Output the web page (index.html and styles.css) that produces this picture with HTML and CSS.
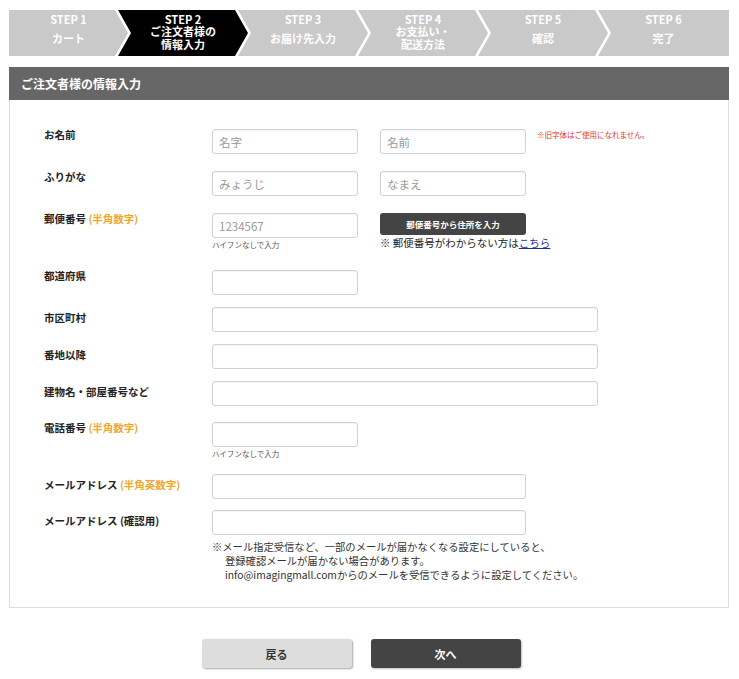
FILE: index.html
```html
<!DOCTYPE html>
<html lang="ja">
<head>
	<meta charset="utf-8">
	<title>ご注文者様の情報入力</title>
	<link rel="stylesheet" href="styles.css">
</head>
<body>
<div class="page">

	<ol class="steps">
		<li class="step step_first">
			<span class="step_no">STEP 1</span>
			<span class="step_name">カート</span>
		</li>
		<li class="step step_current">
			<span class="step_no">STEP 2</span>
			<span class="step_name">ご注文者様の<br>情報入力</span>
		</li>
		<li class="step">
			<span class="step_no">STEP 3</span>
			<span class="step_name">お届け先入力</span>
		</li>
		<li class="step">
			<span class="step_no">STEP 4</span>
			<span class="step_name">お支払い・<br>配送方法</span>
		</li>
		<li class="step">
			<span class="step_no">STEP 5</span>
			<span class="step_name">確認</span>
		</li>
		<li class="step step_last">
			<span class="step_no">STEP 6</span>
			<span class="step_name">完了</span>
		</li>
	</ol>

	<form class="panel">
		<h2 class="panel_title">ご注文者様の情報入力</h2>

		<div class="panel_body">
			<div class="field gap17">
				<label class="field_label">お名前</label>
				<div class="field_inputs">
					<input class="text short" type="text" placeholder="名字">
					<input class="text short" type="text" placeholder="名前">
					<span class="warn">※旧字体はご使用になれません。</span>
				</div>
			</div>

			<div class="field gap17">
				<label class="field_label">ふりがな</label>
				<div class="field_inputs">
					<input class="text short" type="text" placeholder="みょうじ">
					<input class="text short" type="text" placeholder="なまえ">
				</div>
			</div>

			<div class="field gap20">
				<label class="field_label">郵便番号 <em>(半角数字)</em></label>
				<div class="field_inputs">
					<div class="col">
						<input class="text short" type="text" placeholder="1234567">
						<span class="hint">ハイフンなしで入力</span>
					</div>
					<div class="col">
						<button class="zip_btn" type="button">郵便番号から住所を入力</button>
						<span class="zip_note">※ 郵便番号がわからない方は<a href="#">こちら</a></span>
					</div>
				</div>
			</div>

			<div class="field gap12">
				<label class="field_label">都道府県</label>
				<div class="field_inputs">
					<input class="text short" type="text">
				</div>
			</div>

			<div class="field gap12">
				<label class="field_label low">市区町村</label>
				<div class="field_inputs">
					<input class="text wide" type="text">
				</div>
			</div>

			<div class="field gap12">
				<label class="field_label low">番地以降</label>
				<div class="field_inputs">
					<input class="text wide" type="text">
				</div>
			</div>

			<div class="field gap16">
				<label class="field_label low">建物名・部屋番号など</label>
				<div class="field_inputs">
					<input class="text wide" type="text">
				</div>
			</div>

			<div class="field gap15">
				<label class="field_label">電話番号 <em>(半角数字)</em></label>
				<div class="field_inputs">
					<div class="col">
						<input class="text short" type="text">
						<span class="hint">ハイフンなしで入力</span>
					</div>
				</div>
			</div>

			<div class="field gap11">
				<label class="field_label low">メールアドレス <em>(半角英数字)</em></label>
				<div class="field_inputs">
					<input class="text mail" type="email">
				</div>
			</div>

			<div class="field">
				<label class="field_label low">メールアドレス (確認用)</label>
				<div class="field_inputs">
					<div class="col">
						<input class="text mail" type="email">
						<p class="mail_note">※メール指定受信など、一部のメールが届かなくなる設定にしていると、<br>登録確認メールが届かない場合があります。<br>info@imagingmall.comからのメールを受信できるように設定してください。</p>
					</div>
				</div>
			</div>
		</div>
	</form>

	<div class="actions">
		<button class="btn btn_back" type="button">戻る</button>
		<button class="btn btn_next" type="button">次へ</button>
	</div>

</div>
</body>
</html>
```

FILE: styles.css
```css
/* reset */
html, body, div, span, h2, p, ol, li, form, label, em { margin: 0; padding: 0; border: 0; }
ol { list-style: none; }
em { font-style: normal; }

body { font-family: "Noto Sans CJK JP", sans-serif; color: #222; background: #fff; }
.page { padding: 10px 10px 12px 9px; width: 720px; }

/* steps */
.steps { display: flex; height: 46px; }
.step {
	width: 130px; flex: none;
	margin-left: -10px;
	display: flex; flex-direction: column; align-items: center;
	padding: 3px 0 5px;
	box-sizing: border-box;
	background: #c9c9c9; color: #fff; font-weight: bold; text-align: center;
	clip-path: polygon(0 0, calc(100% - 13px) 0, 100% 50%, calc(100% - 13px) 100%, 0 100%, 13px 50%);
}
.step_first { width: 119px; margin-left: 0; clip-path: polygon(0 0, calc(100% - 13px) 0, 100% 50%, calc(100% - 13px) 100%, 0 100%); }
.step_last { flex: 1; clip-path: polygon(0 0, 100% 0, 100% 100%, 0 100%, 13px 50%); }
.step_current { background: #000; }
.step_no { font-size: 11px; line-height: 12px; }
.step_name { flex: 1; display: flex; align-items: center; font-size: 11px; line-height: 13px; }

/* panel */
.panel { margin-top: 11px; border: 1px solid #ddd; border-top: 0; }
.panel_title { margin: 0 -1px; height: 33px; padding-left: 12px; background: #666; color: #fff; font-size: 12px; line-height: 33px; }
.panel_body { padding: 29px 0 25px 34px; }

.field { display: flex; align-items: flex-start; }
.gap11 { margin-bottom: 11px; }
.gap12 { margin-bottom: 12px; }
.gap15 { margin-bottom: 15px; }
.gap16 { margin-bottom: 16px; }
.gap17 { margin-bottom: 17px; }
.gap20 { margin-bottom: 20px; }
.field_label { width: 168px; flex: none; font-size: 10.5px; line-height: 12px; font-weight: bold; color: #222; }
.field_label.low { padding-top: 5px; }
.field_label em { color: #efa72c; }
.field_inputs { display: flex; align-items: flex-start; gap: 22px; }
.col { display: flex; flex-direction: column; }

.text {
	box-sizing: border-box; height: 25px; padding: 0 6px;
	border: 1px solid #cdd2d6; border-radius: 3px;
	box-shadow: inset 0 1px 1px rgba(0,0,0,.04);
	font-family: "Noto Sans CJK JP", sans-serif; font-size: 11.5px; color: #333;
}
.text::placeholder { color: #999; }
.short { width: 146px; }
.wide { width: 386px; }
.mail { width: 314px; }

.warn { margin-left: -11px; padding-top: 1px; font-size: 7.5px; line-height: 10px; color: #e4343a; }
.hint { margin-top: 2px; font-size: 7.5px; line-height: 10px; color: #555; }

.zip_btn {
	width: 146px; height: 22px; border: 0; border-radius: 3px;
	background: #444; color: #fff; font-family: "Noto Sans CJK JP", sans-serif; font-size: 8.5px; font-weight: bold;
}
.zip_note { font-size: 10.5px; line-height: 15px; color: #222; white-space: nowrap; }
.zip_note a { color: #1f2f9a; }

.mail_note { margin-top: 5px; padding-left: 13px; text-indent: -13px; font-size: 10.3px; line-height: 14px; color: #333; white-space: nowrap; }

/* buttons */
.actions { display: flex; justify-content: center; gap: 19px; margin-top: 31px; padding-right: 16px; }
.btn {
	width: 150px; height: 29px; border: 0; border-radius: 3px;
	font-family: "Noto Sans CJK JP", sans-serif; font-size: 11px; font-weight: bold;
}
.btn_back { background: #ddd; color: #333; box-shadow: 1px 1px 2px rgba(0,0,0,.35); }
.btn_next { background: #444; color: #fff; box-shadow: 1px 1px 2px rgba(0,0,0,.25); }
```
